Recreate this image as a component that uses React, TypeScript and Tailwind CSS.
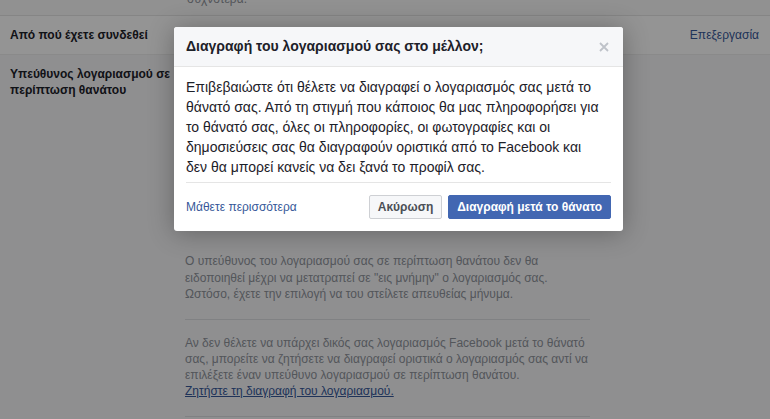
import React from "react";

const font = { fontFamily: '"Liberation Sans", Arial, sans-serif' };

function CloseIcon() {
  return (
    <svg width="10" height="10" viewBox="0 0 10 10" className="text-[#bec2c9]">
      <path d="M1 1 L9 9 M9 1 L1 9" stroke="currentColor" strokeWidth="1.8" />
    </svg>
  );
}

export default function App() {
  return (
    <div className="relative w-[770px] h-[419px] overflow-hidden bg-white" style={font}>
      {/* page underneath */}
      <div className="flex flex-col">
        <div className="h-[16px] overflow-hidden bg-[#fafafa] border-b border-[#e5e5e5] pl-[187px]">
          <div className="text-[12px] text-[#90949c] leading-[16px] -mt-[9px]">συχνότερα.</div>
        </div>
        <div className="h-[39px] flex items-center justify-between bg-white border-b border-[#eeeeee] pl-[10px] pr-[11px]">
          <span className="text-[12px] font-bold text-[#1d2129]">Από πού έχετε συνδεθεί</span>
          <span className="text-[12px] text-[#365899]">Επεξεργασία</span>
        </div>
        <div className="flex bg-[#f6f7f9] h-[364px]">
          <div className="w-[176px] pl-[10px] pt-[11px]">
            <div className="text-[12px] font-bold text-[#1d2129] leading-[16px]">
              Υπεύθυνος λογαριασμού σε περίπτωση θανάτου
            </div>
          </div>
          <div className="w-[405px] ml-[9px] pt-[198px]">
            <p className="text-[12px] leading-[16.5px] text-[#90949c]">
              Ο υπεύθυνος του λογαριασμού σας σε περίπτωση θανάτου δεν θα ειδοποιηθεί μέχρι να μετατραπεί σε "εις μνήμην" ο λογαριασμός σας. Ωστόσο, έχετε την επιλογή να του στείλετε απευθείας μήνυμα.
            </p>
            <div className="border-t border-[#dddfe2] mt-[16px] pt-[15px]">
              <p className="text-[12px] leading-[16px] text-[#90949c]">
                Αν δεν θέλετε να υπάρχει δικός σας λογαριασμός Facebook μετά το θάνατό σας, μπορείτε να ζητήσετε να διαγραφεί οριστικά ο λογαριασμός σας αντί να επιλέξετε έναν υπεύθυνο λογαριασμού σε περίπτωση θανάτου.
                <br />
                <span className="text-[#365899] underline">Ζητήστε τη διαγραφή του λογαριασμού.</span>
              </p>
            </div>
            <div className="border-t border-[#dddfe2] mt-[17px]" />
          </div>
        </div>
      </div>

      {/* dim overlay */}
      <div className="absolute inset-0 bg-black/[0.42]" />

      {/* modal */}
      <div className="absolute left-[174px] top-[27px] w-[449px] bg-white rounded-[3px] shadow-[0_2px_26px_rgba(0,0,0,0.3)] overflow-hidden">
        <div className="h-[40px] bg-[#f6f7f9] border-b border-[#e5e5e5] flex items-center justify-between pl-[12px] pr-[14px]">
          <span className="text-[14px] font-bold text-[#1d2129]">Διαγραφή του λογαριασμού σας στο μέλλον;</span>
          <CloseIcon />
        </div>
        <div className="mx-[12px] pt-[10px] pb-[5px] border-b border-[#e5e5e5]">
          <p className="text-[14px] leading-[20px] text-[#1d2129] pr-[3px]">
            Επιβεβαιώστε ότι θέλετε να διαγραφεί ο λογαριασμός σας μετά το θάνατό σας. Από τη στιγμή που κάποιος θα μας πληροφορήσει για το θάνατό σας, όλες οι πληροφορίες, οι φωτογραφίες και οι δημοσιεύσεις σας θα διαγραφούν οριστικά από το Facebook και {"δεν\u00a0θα"} μπορεί κανείς να δει ξανά το προφίλ σας.
          </p>
        </div>
        <div className="flex items-center justify-between px-[12px] py-[12px]">
          <span className="text-[12px] text-[#365899]">Μάθετε περισσότερα</span>
          <div className="flex gap-[6px]">
            <button className="h-[24px] px-[8px] rounded-[2px] border border-[#ced0d4] bg-[#f6f7f9] text-[12px] font-bold text-[#4b4f56]">
              Ακύρωση
            </button>
            <button className="h-[24px] px-[8px] rounded-[2px] border border-[#4267b2] bg-[#4267b2] text-[12px] font-bold text-white">
              Διαγραφή μετά το θάνατο
            </button>
          </div>
        </div>
      </div>
    </div>
  );
}
